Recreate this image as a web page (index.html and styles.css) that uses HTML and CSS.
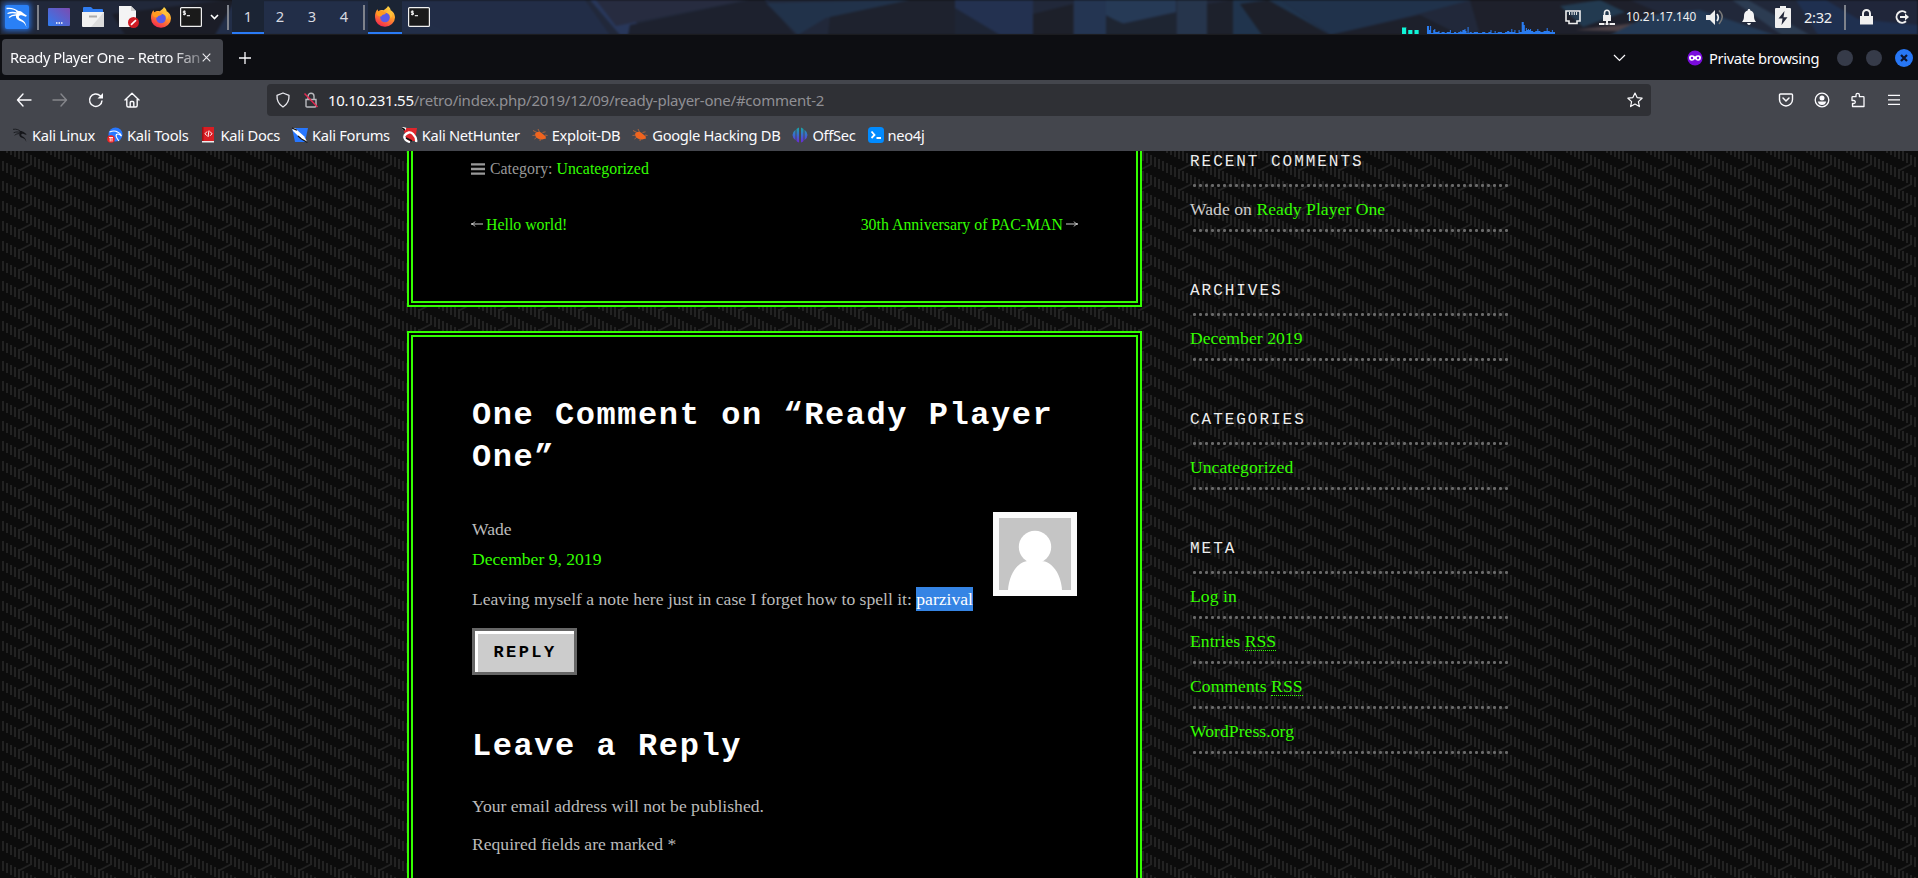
FILE: index.html
```html
<!DOCTYPE html>
<html lang="en">
<head>
<meta charset="utf-8">
<title>Ready Player One – Retro Fanatics</title>
<link rel="stylesheet" href="styles.css">
</head>
<body>
<svg class="defs" width="0" height="0" aria-hidden="true">
  <defs>
    <linearGradient id="ffg" x1="0.8" y1="0" x2="0.3" y2="1"><stop offset="0" stop-color="#ffe14a"/><stop offset=".45" stop-color="#ff9a2a"/><stop offset="1" stop-color="#f5264f"/></linearGradient>
    <linearGradient id="desk" x1="0" y1="1" x2="1" y2="0"><stop offset="0" stop-color="#2f7cf0"/><stop offset="1" stop-color="#7d4bb0"/></linearGradient>
    <linearGradient id="offg" x1="0" y1="0" x2="0" y2="1"><stop offset="0" stop-color="#17a9a4"/><stop offset=".5" stop-color="#3a6ad0"/><stop offset="1" stop-color="#6a28d8"/></linearGradient>
    <symbol id="firefox" viewBox="0 0 22 22">
      <path d="M14 1c2 1.500 2.500 3 2.800 4.500C19 6 21 9.500 21 12.500A10 9.300 0 0 1 1 12.300C.8 9 1.800 6 3.500 4.300l.8 2.200C6 5 8 4.800 9.500 5.300 11 4.500 13 3 14 1z" fill="url(#ffg)"/>
      <circle cx="11" cy="12.500" r="4.800" fill="#5a5be8"/>
      <path d="M2 8c2-2 5-2.500 7-1.500l3 1.500c-.5 1.200-2 1.500-3 1.800-1 .4-1.300 1-1.800 1.800L4 11z" fill="#ff9a1f"/>
      <path d="M12 8c3 0 5 2 4.500 5.500C19 11 18.500 7 15 5c-1 .8-2 1.800-3 3z" fill="#ffc13a"/>
    </symbol>
    <symbol id="terminal" viewBox="0 0 22 20">
      <rect x=".6" y=".6" width="20.800" height="18.800" rx="1" fill="#1a1a1a" stroke="#f0f0f0" stroke-width="1.200"/>
      <path d="M5.700 4.300H3.300v1.500h2.200v1.600H3M4.300 3.400v5" stroke="#fff" stroke-width=".9" fill="none"/><path d="M6.800 8.700h3.200" stroke="#fff" stroke-width="1.100"/>
    </symbol>
    <symbol id="dragon" viewBox="0 0 24 24">
      <path d="M1.500 3.500c5-.8 8.500.5 11.500 3.200M2.500 8.500c3.500-1.300 6-1.300 9-.5M4 12.500c2-1.800 4-2.600 7-2.500" fill="none" stroke="currentColor" stroke-width="1.300"/>
      <path d="M11 6c3-.5 5.500.5 7 2l4 2.800-1.200 1-3.300-1.300c-2-.6-3.700 0-3.700 1.500 0 2.600 7 1.700 7.700 10.500-1.300-4.500-4-5.700-6.500-6.500-3-1-4.500-2.800-4-6C11.200 8 12 7.200 11 6z" fill="currentColor"/>
    </symbol>
    <symbol id="bug" viewBox="0 0 16 16">
      <path d="M3 7c1-2.500 4-3 6-1.500l4.500 3.800.5 2.200-3 .8C8 13 4.500 11.500 3.300 9z" fill="#f0641e"/>
      <path d="M1 3.500l4 2M6 2l1.500 3M.5 8.500L4 8M2.500 12L5 10M8 14l.3-2.500M10.500 5.500l3-.7M13 8l2.500.5" stroke="#b8663c" stroke-width=".9" fill="none"/>
    </symbol>
  </defs>
</svg>

<header class="panel">
  <svg class="wallpaper" viewBox="0 0 1918 35" preserveAspectRatio="none">
    <rect width="1918" height="35" fill="#21283a"/>
    <path d="M112 14L225 0h20l-30 35H125z" fill="#1b1d27"/>
    <path d="M235 0h160l60 35H215z" fill="#222e48"/>
    <path d="M375 0h210l25 35H455z" fill="#222d47"/>
    <path d="M590 0h22l28 26 120-26h10L650 35H620z" fill="#28375a"/>
    <path d="M596 0h150l-130 26z" fill="#272c40"/>
    <path d="M630 25L750 0h15l30 35H628z" fill="#1d212e"/>
    <path d="M766 3l130-3h50L826 18l-28 17z" fill="#21324a"/>
    <path d="M830 17l80-17h60v35H828z" fill="#1e222e"/>
    <path d="M955 0h78v35H955z" fill="#233150"/>
    <path d="M955 8l45 27h-45z" fill="#1e2535"/>
    <path d="M1033 14l40-10v31h-40z" fill="#1d202a"/>
    <path d="M1074 0h32v35h-32z" fill="#243552"/>
    <path d="M1106 0h70v12l-55 12-15-9z" fill="#263a56"/>
    <path d="M1106 16l18 8 52-11v22h-70z" fill="#1e2532"/>
    <path d="M1177 0h30v35h-30z" fill="#26354c"/>
    <path d="M1207 4l26-4v35h-26z" fill="#1d212c"/>
    <path d="M1233 0h48l49 35h-97z" fill="#20344d"/>
    <path d="M1240 4l28-4 62 35h-68z" fill="#1d202a"/>
    <path d="M1281 0h190l-60 16-80 19z" fill="#20324b"/>
    <path d="M1330 35l90-20 40 20z" fill="#1d202b"/>
    <path d="M1470 0h160l80 35H1480z" fill="#1e202b"/>
    <path d="M1560 6l40-6 25 12-42 15z" fill="#223a50"/>
    <path d="M1575 30l70-8 5 10z" fill="#4c4146"/>
    <path d="M1610 35l40-20 50-5 75 25z" fill="#243a56"/>
    <path d="M1732 0l50 35h28L1748 0z" fill="#2c3c52"/>
    <path d="M1796 0h122v35h-100z" fill="#1f3050"/>
    <path d="M1826 0h92v25l-60-6z" fill="#20263a"/>
  </svg>
  <div class="launchers">
    <span class="logo"><svg width="24" height="24" viewBox="0 0 24 24"><use href="#dragon"/></svg></span>
    <i class="sep"></i>
    <svg class="i-desk" width="22" height="18" viewBox="0 0 22 18"><rect width="22" height="18" rx="1" fill="url(#desk)"/><path d="M8 15h1.500M10.500 15H12M13 15h1.500" stroke="#fff" stroke-width="1.300"/></svg>
    <svg class="i-folder" width="22" height="20" viewBox="0 0 22 20"><path d="M1 1q0-1 1-1h7l2 2h9q1 0 1 1v5H1z" fill="#2f7cf0"/><path d="M0 5h22v14q0 1-1 1H1q-1 0-1-1z" fill="#f1f1f1"/><path d="M22 5v14q0 1-1 1H9z" fill="#dcdcdc"/><path d="M7 9.500h8" stroke="#aaa" stroke-width="2"/></svg>
    <svg class="i-doc" width="22" height="22" viewBox="0 0 22 22"><path d="M1 0h12l5 5v16H1z" fill="#f4f4f4"/><path d="M13 0l5 5h-5z" fill="#cfcfcf"/><circle cx="15.500" cy="16.500" r="5.500" fill="#d01c24"/><path d="M13 18.800l5-4.600" stroke="#fff" stroke-width="1.700"/></svg>
    <svg class="i-ff" width="22" height="22"><use href="#firefox"/></svg>
    <svg class="i-term" width="22" height="20"><use href="#terminal"/></svg>
    <svg class="i-chev" width="9" height="6" viewBox="0 0 9 6"><path d="M1 1l3.500 3.500L8 1" fill="none" stroke="#fff" stroke-width="1.600"/></svg>
    <i class="sep"></i>
    <nav class="workspaces"><span class="on">1</span><span>2</span><span>3</span><span>4</span></nav>
    <i class="sep"></i>
    <span class="task on"><svg width="22" height="22"><use href="#firefox"/></svg></span>
    <svg class="i-term2" width="22" height="20"><use href="#terminal"/></svg>
  </div>
  <div class="tray">
    <svg class="graph" width="153" height="14" viewBox="0 0 147 14" preserveAspectRatio="none">
      <path d="M0 6h4v7H0zM6 9h4v4H6zM12 9h4v4h-4z" fill="#0ff5d8"/><path d="M0 6h4v1H0z" fill="#128f80"/>
      <path d="M24 13V5h2v4h1V5h1v7h2V9h1V8h1v3h3v-1h1v2h2v-1h3v1h2v-1h3V9h1v3h3v-1h2v1h2v-1h2v-1h1v1h1V9h2V8h1v2h1v2h1V6h1v6h1v-1h2v1h2v-1h4v1h4v-1h3v1h3v-1h2V9h1v3h3v-2h1v2h2v-1h4v1h3v-1h2v-1h2v1h2V8h1v3h2v-2h1v3h3V9h1v2h2V1h2v3h1v6h1V7h1v2h1V8h1v1h1V8h1v2h2v1h2v-1h2V8h1v2h2v1h3v-1h3V7h1v3h2v1h2V9h1v2h2v2z" fill="#2a7cf0"/>
    </svg>
    <svg class="t-net" width="16" height="15" viewBox="0 0 16 15"><path d="M1 1h14v10h-3v2.500H4V11H1z" fill="none" stroke="#eee" stroke-width="1.600"/><path d="M4.500 2v3M7 2v3M9.300 2v3M11.600 2v3" stroke="#eee"/></svg>
    <svg class="t-vpn" width="16" height="17" viewBox="0 0 16 17"><path d="M4 6h8v6H4z" fill="#eee"/><path d="M5.500 6.500V4a2.500 2.800 0 0 1 5 0v2.500" fill="none" stroke="#eee" stroke-width="1.600"/><path d="M8 12v4M0 15h5.500M6.500 15h3M10.500 15H16" stroke="#eee" stroke-width="2"/></svg>
    <span class="ip">10.21.17.140</span>
    <svg class="t-vol" width="18" height="17" viewBox="0 0 18 17"><path d="M0 6h4l5-5v15l-5-5H0z" fill="#eee"/><path d="M11 5q2.500 3.500 0 7" fill="none" stroke="#eee" stroke-width="1.700"/><path d="M13 1.500q6.500 6 0 13.500" fill="none" stroke="#777" stroke-width="1.600"/></svg>
    <svg class="t-bell" width="14" height="16" viewBox="0 0 14 16"><path d="M7 0c1 0 1.300.7 1.300 1.400C11 2 12 4 12 7c0 3 .7 4.500 2 6H0c1.300-1.500 2-3 2-6 0-3 1-5 3.700-5.600C5.700.7 6 0 7 0zM5 14h4q-.5 2-2 2t-2-2z" fill="#f4f4f4"/></svg>
    <svg class="t-bat" width="16" height="22" viewBox="0 0 16 22"><path d="M5 0h6v2h4q1 0 1 1v18q0 1-1 1H1q-1 0-1-1V3q0-1 1-1h4z" fill="#f0f0f0"/><path d="M9.500 5L3.500 12.500h4L6.500 19l6-7.700h-4z" fill="#23283a"/></svg>
    <span class="clock">2:32</span>
    <i class="sep"></i>
    <svg class="t-lock" width="13" height="16" viewBox="0 0 13 16"><path d="M0 7h13v8.500H0z" fill="#f0f0f0"/><path d="M3 7V4.500a3.500 3.500 0 0 1 7 0V7" fill="none" stroke="#f0f0f0" stroke-width="2"/></svg>
    <svg class="t-out" width="14" height="14" viewBox="0 0 14 14"><path d="M11 2.700A5.700 5.700 0 1 0 11 11.300" fill="none" stroke="#f0f0f0" stroke-width="2"/><path d="M5 7h6" stroke="#f0f0f0" stroke-width="2"/><path d="M10 3.500L14 7l-4 3.500z" fill="#f0f0f0"/></svg>
  </div>
</header>

<div class="tabbar">
  <div class="tab"><span class="tab-title">Ready Player One – Retro Fan</span><svg width="9" height="9" viewBox="0 0 9 9"><path d="M.7.7l7.600 7.600M8.300.7L.7 8.300" stroke="#ececf0" stroke-width="1.100"/></svg></div>
  <svg class="newtab" width="12" height="12" viewBox="0 0 12 12"><path d="M6 0v12M0 6h12" stroke="#fbfbfe" stroke-width="1.300"/></svg>
  <svg class="alltabs" width="13" height="8" viewBox="0 0 13 8"><path d="M1 1l5.500 5.500L12 1" fill="none" stroke="#fbfbfe" stroke-width="1.200"/></svg>
  <svg class="mask" width="16" height="16" viewBox="0 0 16 16"><circle cx="8" cy="8" r="7.600" fill="#7a0bdc"/><path d="M2 7.200q0-2 2.500-2 2 0 3.500 1.200 1.500-1.200 3.500-1.200 2.500 0 2.500 2 0 3.600-3 3.600-1.700 0-3-1.700-1.300 1.700-3 1.700-3 0-3-3.600z" fill="#fff"/><circle cx="5" cy="8" r="1.200" fill="#7a0bdc"/><circle cx="11" cy="8" r="1.200" fill="#7a0bdc"/></svg>
  <span class="private">Private browsing</span>
  <i class="win"></i><i class="win"></i>
  <i class="win close"><svg width="8" height="8" viewBox="0 0 8 8"><path d="M1 1l6 6M7 1L1 7" stroke="#0d1530" stroke-width="2.200"/></svg></i>
</div>

<div class="toolbar">
  <svg class="n-back" width="16" height="14" viewBox="0 0 16 14"><path d="M7 1L1.500 7 7 13M1.500 7H15" fill="none" stroke="#fbfbfe" stroke-width="1.400" stroke-linejoin="round" stroke-linecap="round"/></svg>
  <svg class="n-fwd" width="16" height="14" viewBox="0 0 16 14"><path d="M9 1l5.500 6L9 13M14.500 7H1" fill="none" stroke="#85868b" stroke-width="1.400" stroke-linejoin="round" stroke-linecap="round"/></svg>
  <svg class="n-rel" width="16" height="16" viewBox="0 0 16 16"><path d="M14 8.500A6.200 6.200 0 1 1 12.200 3.800L14 5.500" fill="none" stroke="#fbfbfe" stroke-width="1.500"/><path d="M15 1v5.500H9.500z" fill="#fbfbfe"/></svg>
  <svg class="n-home" width="16" height="16" viewBox="0 0 16 16"><path d="M1 8L8 1.200 15 8M2.800 7v6.500q0 1.500 1.500 1.500h7.400q1.500 0 1.500-1.500V7M6.200 15v-4.500q0-1 1-1h1.600q1 0 1 1V15" fill="none" stroke="#fbfbfe" stroke-width="1.400" stroke-linejoin="round" stroke-linecap="round"/></svg>
  <div class="urlbar">
    <svg class="u-shield" width="16" height="16" viewBox="0 0 16 16"><path d="M8 1l6 2.300c.3 5.200-1.500 9-6 11.700-4.500-2.700-6.300-6.500-6-11.700z" fill="none" stroke="#e8e8ee" stroke-width="1.300" stroke-linejoin="round"/></svg>
    <svg class="u-lock" width="16" height="16" viewBox="0 0 16 16"><path d="M3 7.500h10V14q0 1-1 1H4q-1 0-1-1zM5 7V4.300a3 3 0 0 1 6 0V7" fill="none" stroke="#b9b9be" stroke-width="1.400"/><path d="M1.500 1.500l13 13.500" stroke="#e22850" stroke-width="1.500"/></svg>
    <span class="url"><b>10.10.231.55</b>/retro/index.php/2019/12/09/ready-player-one/#comment-2</span>
    <svg class="u-star" width="16" height="16" viewBox="0 0 16 16"><path d="M8 1l2.100 4.600 5 .6-3.700 3.400 1 5L8 12.100l-4.400 2.500 1-5L.9 6.200l5-.6z" fill="none" stroke="#fbfbfe" stroke-width="1.200" stroke-linejoin="round"/></svg>
  </div>
  <div class="actions">
    <svg width="16" height="16" viewBox="0 0 16 16"><path d="M2.500 2h11q1 0 1 1v4.500a6.500 6.500 0 0 1-13 0V3q0-1 1-1z" fill="none" stroke="#fbfbfe" stroke-width="1.400"/><path d="M5 6l3 3 3-3" fill="none" stroke="#fbfbfe" stroke-width="1.500" stroke-linecap="round"/></svg>
    <svg width="16" height="16" viewBox="0 0 16 16"><circle cx="8" cy="8" r="6.800" fill="none" stroke="#fbfbfe" stroke-width="1.300"/><circle cx="8" cy="6" r="2.500" fill="#fbfbfe"/><path d="M3.800 9.500h8.400q-.8 3.500-4.200 3.500t-4.200-3.500z" fill="#fbfbfe"/></svg>
    <svg width="16" height="16" viewBox="0 0 16 16"><path d="M2 8.500V5.500q0-.8.8-.8H6V3a1.700 1.700 0 0 1 3.400 0v1.700h3.800q.8 0 .8.800v9H2.500v-3h1.300a1.500 1.500 0 0 0 0-3z" fill="none" stroke="#fbfbfe" stroke-width="1.300" stroke-linejoin="round"/></svg>
    <svg width="16" height="16" viewBox="0 0 16 16"><path d="M2 3.300h12M2 7.800h12M2 12.300h12" stroke="#fbfbfe" stroke-width="1.300"/></svg>
  </div>
</div>

<nav class="bookmarks">
  <a><svg class="dark" width="16" height="16" viewBox="0 0 24 24"><use href="#dragon"/></svg>Kali Linux</a>
  <a><svg width="16" height="16" viewBox="0 0 16 16"><circle cx="8.500" cy="7.500" r="7" fill="#2777ff"/><path d="M2.500 5q5-2 8 0 3 1 4 4-3-3-5-1.500Q8 9 12 14" fill="none" stroke="#fff" stroke-width="1.200"/><circle cx="4" cy="12" r="3.800" fill="#e22"/><path d="M2 10.500h4M3.200 10.500v4M5 10.500v4" stroke="#fff" stroke-width=".9"/></svg>Kali Tools</a>
  <a><svg width="16" height="16" viewBox="0 0 16 16"><path d="M2 0h12v14H2z" fill="#d81e24"/><path d="M2 0h1.500v14H2z" fill="#a01014"/><path d="M2 14h12v1.500H2z" fill="#eee"/><path d="M7 4.500L5 6.800l2 2M10 4.500l2 2.300-2 2M9 3.500l-1 6.500" stroke="#fff" fill="none"/></svg>Kali Docs</a>
  <a><svg width="16" height="16" viewBox="0 0 16 16"><path d="M0 1h16l-3 14H3z" fill="#2777ff"/><path d="M0 1l3 .2 9 8 3.500 6.300-6-3.500L1 4z" fill="#fff"/><path d="M0 1l5 2.300M6 9l3.500 3M9.500 12l6 3.500" stroke="#111" stroke-width="1.200"/></svg>Kali Forums</a>
  <a><svg width="16" height="16" viewBox="0 0 16 16"><path d="M1 1h14l-2 13H5z" fill="#e0262c"/><path d="M0 1l4 1M2 9q5-6 9-2 4 4 3 8M2 9q1 5 6 6" fill="none" stroke="#fff" stroke-width="2.400"/><path d="M0 1l3 2M4 11l6 3" stroke="#111" stroke-width="1.600"/></svg>Kali NetHunter</a>
  <a><svg width="16" height="16"><use href="#bug"/></svg>Exploit-DB</a>
  <a><svg width="16" height="16"><use href="#bug"/></svg>Google Hacking DB</a>
  <a><svg width="16" height="16" viewBox="0 0 16 16"><path d="M7 .5v15Q5.500 15 4.500 14V2Q5.500 1 7 .5zM9 .5v15q1.500-.5 2.500-1.500V2Q10.500 1 9 .5zM3.500 2.800v10.400Q.5 11 .5 8t3-5.200zM12.500 2.800v10.400q3-2.200 3-5.200t-3-5.200z" fill="url(#offg)"/></svg>OffSec</a>
  <a><svg width="16" height="16" viewBox="0 0 16 16"><rect width="16" height="16" rx="3.500" fill="#018bff"/><path d="M3.500 4.500L6.500 8l-3 3M8.500 11h4.500" fill="none" stroke="#fff" stroke-width="1.800"/></svg>neo4j</a>
</nav>

<main class="page">
  <div class="column">
    <article class="card post">
      <p class="cat"><svg width="14" height="12" viewBox="0 0 14 12"><path d="M0 1.300h14M0 6h14M0 10.700h14" stroke="#999" stroke-width="2.300"/></svg>Category: <a>Uncategorized</a></p>
      <nav class="postnav">
        <span><svg width="12" height="6" viewBox="0 0 12 6"><path d="M0 3h12" stroke="#ccc"/><path d="M4 .5Q3 2.500 .5 3 3 3.500 4 5.500" fill="none" stroke="#ccc" stroke-width=".9"/></svg><a>Hello world!</a></span>
        <span><a>30th Anniversary of PAC-MAN</a><svg width="12" height="6" viewBox="0 0 12 6"><path d="M0 3h12" stroke="#ccc"/><path d="M8 .5Q9 2.500 11.500 3 9 3.500 8 5.500" fill="none" stroke="#ccc" stroke-width=".9"/></svg></span>
      </nav>
    </article>
    <section class="card comments">
      <h2>One Comment on “Ready Player One”</h2>
      <div class="comment">
        <div class="body">
          <p class="author">Wade</p>
          <p class="date"><a>December 9, 2019</a></p>
          <p class="text">Leaving myself a note here just in case I forget how to spell it: <mark>parzival</mark></p>
        </div>
        <svg class="avatar" width="84" height="84" viewBox="0 0 84 84"><rect width="84" height="84" fill="#fafafa"/><rect x="6" y="6" width="72" height="72" fill="#c5c5c5"/><circle cx="42" cy="35" r="16.200" fill="#fff"/><path d="M15 78C16 62 25 49 36 49h12c11 0 20 13 21 29z" fill="#fff"/></svg>
      </div>
      <a class="reply">Reply</a>
      <h2 class="leave">Leave a Reply</h2>
      <p class="note">Your email address will not be published.</p>
      <p class="note">Required fields are marked *</p>
    </section>
  </div>
  <aside class="sidebar">
    <section><h3>Recent Comments</h3><ul><li>Wade on <a>Ready Player One</a></li></ul></section>
    <section><h3>Archives</h3><ul><li><a>December 2019</a></li></ul></section>
    <section><h3>Categories</h3><ul><li><a>Uncategorized</a></li></ul></section>
    <section><h3>Meta</h3><ul><li><a>Log in</a></li><li><a>Entries <abbr>RSS</abbr></a></li><li><a>Comments <abbr>RSS</abbr></a></li><li><a>WordPress.org</a></li></ul></section>
  </aside>
</main>
</body>
</html>
```

FILE: styles.css
```css
* { box-sizing: border-box; }
html, body { margin: 0; height: 100%; overflow: hidden; }
body { display: flex; flex-direction: column; background: #0c0c0c; font-family: "Noto Sans", "Open Sans", sans-serif; }
svg { display: block; flex: none; }
p, h2, h3, ul { margin: 0; padding: 0; font-weight: normal; }
.defs { position: absolute; }

/* Desktop panel */
.panel { position: relative; display: flex; justify-content: space-between; height: 35px; flex: none; overflow: hidden; border-bottom: 1px solid #1b1c20; }
.wallpaper { position: absolute; left: 0; top: 0; width: 1918px; height: 35px; filter: blur(1px); }
.launchers, .tray { position: relative; display: flex; align-items: center; height: 34px; }
.launchers { padding-left: 5px; }
.logo { width: 24px; height: 24px; background: #2a80f5; color: #fff; border-radius: 2px; box-shadow: 0 0 5px 2px #2663c0; }
.sep { width: 2px; height: 25px; background: #7e828b; flex: none; }
.logo + .sep { margin-left: 8px; }
.i-desk { margin-left: 9px; }
.i-folder { margin-left: 12px; }
.i-doc { margin-left: 14px; }
.i-ff { margin-left: 10px; }
.i-term { margin-left: 8px; }
.i-chev { margin-left: 8px; }
.i-chev + .sep { margin-left: 8px; }
.workspaces { display: flex; height: 34px; margin-left: 3px; }
.workspaces span { width: 32px; line-height: 32px; text-align: center; font-size: 14.7px; color: #d8dae0; }
.workspaces .on { background: #1b2434; border-bottom: 2px solid #2a7bf6; }
.workspaces + .sep { margin-left: 3px; }
.task { display: flex; align-items: center; justify-content: center; width: 34px; height: 34px; margin-left: 3px; background: #1b2434; border-bottom: 2px solid #2a7bf6; }
.i-term2 { margin-left: 6px; }
.tray { padding-right: 9px; color: #f0f0f0; }
.graph { align-self: flex-end; margin-bottom: -1px; }
.t-net { margin-left: 10px; }
.t-vpn { margin-left: 18px; }
.ip { width: 71px; margin-left: 11px; margin-top: -3px; font-size: 11.8px; white-space: nowrap; }
.t-vol { margin-left: 9px; }
.t-bell { margin-left: 18px; }
.t-bat { margin-left: 19px; }
.clock { width: 29px; margin-left: 13px; font-size: 14.7px; letter-spacing: -.3px; white-space: nowrap; }
.tray .sep { margin-left: 11px; }
.t-lock { margin-left: 14px; }
.t-out { margin-left: 22px; }

/* Browser tabs */
.tabbar { display: flex; align-items: center; height: 45px; flex: none; background: #0d0e12; padding: 0 5px 0 2px; }
.tab { display: flex; align-items: center; width: 221px; height: 36px; padding: 0 12px 0 8px; border-radius: 4px; background: #42444b; margin-bottom: 1px; }
.tab-title { width: 194px; height: 24px; line-height: 24px; white-space: nowrap; font-size: 14.7px; letter-spacing: -.45px; color: #fbfbfe; -webkit-mask-image: linear-gradient(90deg, #000 160px, transparent 204px); mask-image: linear-gradient(90deg, #000 160px, transparent 204px); }
.newtab { margin-left: 16px; }
.alltabs { margin-left: auto; }
.mask { margin-left: 61px; }
.private { width: 108px; margin-left: 6px; font-size: 14.7px; letter-spacing: -.35px; color: #fbfbfe; white-space: nowrap; }
.win { display: flex; align-items: center; justify-content: center; width: 16px; height: 16px; margin-left: 13px; border-radius: 50%; background: #363b49; flex: none; }
.private + .win { margin-left: 20px; }
.win.close { width: 18px; height: 18px; background: #2777f5; }

/* Navigation toolbar */
.toolbar { display: flex; align-items: center; height: 40px; flex: none; background: #44464d; padding-left: 16px; }
.n-fwd { margin-left: 20px; }
.n-rel { margin-left: 20px; }
.n-home { margin-left: 20px; }
.urlbar { display: flex; align-items: center; width: 1384px; height: 32px; margin-left: 127px; border-radius: 4px; background: #2f3035; padding: 0 8px; }
.u-lock { margin-left: 12px; }
.url { margin-left: 9px; font-size: 15px; letter-spacing: -.23px; color: #8f8f94; white-space: nowrap; }
.url b { font-weight: normal; letter-spacing: -.3px; color: #fbfbfe; }
.u-star { margin-left: auto; }
.actions { display: flex; gap: 20px; margin-left: 127px; }

.bookmarks { display: flex; align-items: center; gap: 12px; height: 31px; flex: none; background: #44464d; padding: 0 0 1px 12px; }
.bookmarks a { display: flex; align-items: center; gap: 4px; font-size: 14.7px; line-height: 24px; letter-spacing: -.31px; color: #fbfbfe; white-space: nowrap; }
.bookmarks .dark { color: #15161a; }

/* Web page */
.page {
  display: flex; flex: 1; min-height: 0; overflow: hidden; padding-left: 407px;
  font-family: "Liberation Serif", "Times New Roman", serif; font-size: 17.6px; color: #bbb;
  background: #0c0c0c url("data:image/svg+xml,%3Csvg xmlns='http://www.w3.org/2000/svg' width='40' height='20'%3E%3Cpath d='M3 0v10M7 2v10M11 4v10M15 6v10M19 8v10M23 10v10M27 12v8M27 0v2M31 14v6M31 0v4M35 16v4M35 0v6M39 18v2M39 0v8' stroke='%23222' stroke-width='2'/%3E%3Cpath d='M18.500 9.700L31.500 3' stroke='%23222' stroke-width='1.800'/%3E%3C/svg%3E") 0 10px;
}
.page a { color: #33ff00; }
.column { width: 735px; }
.card { border: 6px double #33ff00; background: #000; padding: 0 59px; }
.post { height: 156px; border-top: 0; padding: 5px 58px 0; font-size: 15.85px; color: #999; }
.cat { display: flex; align-items: center; line-height: 26px; white-space: pre; }
.cat svg { margin-right: 5px; }
.postnav { display: flex; justify-content: space-between; margin-top: 30px; line-height: 26px; }
.postnav span { display: flex; align-items: center; gap: 3px; }
.postnav svg { margin-top: -3px; }
.comments { height: 600px; margin-top: 24px; padding-top: 58px; }
h2 { font-family: "Liberation Mono", "Courier New", monospace; font-weight: bold; font-size: 32px; line-height: 42px; letter-spacing: 1.560px; color: #fff; }
.comment { display: flex; margin-top: 33px; height: 116px; }
.body { flex: 1; line-height: 30px; white-space: nowrap; padding-top: 2px; }
.text { margin-top: 10px; }
mark { background: #3584e4; color: #fff; padding: 2px 0; }
.reply { display: flex; align-items: center; justify-content: center; width: 105px; height: 47px; border: 3px solid #666; background: #ccc; box-shadow: inset 3px 3px 0 #fff; font: bold 17px "Liberation Mono", monospace; letter-spacing: 2.400px; text-transform: uppercase; padding: 1px 0 0 1px; }
.page .reply { color: #000; }
.leave { margin: 51px 0 23px; }
.note { line-height: 30px; margin-bottom: 8px; }

.sidebar { width: 319px; margin: -1px 0 0 48px; font-size: 17.6px; }
.sidebar section { margin-bottom: 47px; }
.sidebar ul { list-style: none; }
.sidebar h3, .sidebar li { margin-left: 3px; text-indent: -3px; background: radial-gradient(circle at 1.500px 1.500px, #6a6a6a 1.200px, transparent 1.900px) 0 100% / 6px 3px repeat-x; }
.sidebar h3 { height: 37px; font: 16px/24px "Liberation Mono", monospace; letter-spacing: 1.970px; text-transform: uppercase; color: #eee; }
.sidebar li { height: 45px; line-height: 44px; color: #ccc; }
.sidebar li > a:only-child, .sidebar li { letter-spacing: .05px; }
abbr { display: inline-block; text-indent: 0; line-height: 17px; border-bottom: 1px dotted #33ff00; text-decoration: none; }
```
